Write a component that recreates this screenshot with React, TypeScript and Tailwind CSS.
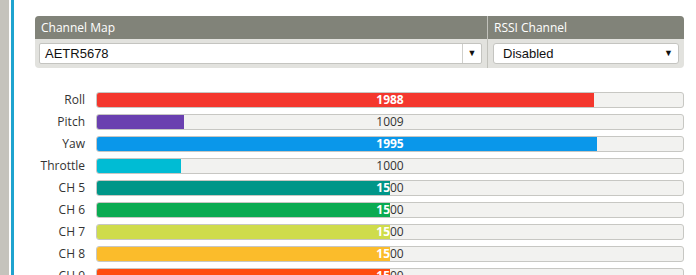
import React from "react"

const channels = [
  { name: "Roll", value: 1988, color: "bg-[#f4372d]" },
  { name: "Pitch", value: 1009, color: "bg-[#6a40b0]" },
  { name: "Yaw", value: 1995, color: "bg-[#0a97ea]" },
  { name: "Throttle", value: 1000, color: "bg-[#00bcd4]" },
  { name: "CH 5", value: 1500, color: "bg-[#009688]" },
  { name: "CH 6", value: 1500, color: "bg-[#0aab52]" },
  { name: "CH 7", value: 1500, color: "bg-[#cfdc4b]" },
  { name: "CH 8", value: 1500, color: "bg-[#fbbc2b]" },
  { name: "CH 9", value: 1500, color: "bg-[#ff4b0e]" },
]

function Meter({ value, color }: { value: number; color: string }) {
  const pct = ((value - 800) / 1400) * 100
  return (
    <div className="relative h-[16px] flex-1 overflow-hidden rounded-[3px] border border-[#c7c7c3] bg-[#f2f2f0]">
      <div className="absolute inset-0 flex items-center justify-center text-[12px] leading-none text-[#333]">
        {value}
      </div>
      <div className={`absolute inset-y-0 left-0 overflow-hidden ${color}`} style={{ width: `${pct}%` }}>
        <div className="flex h-full w-[586px] items-center justify-center text-[12px] font-bold leading-none text-white">
          {value}
        </div>
      </div>
    </div>
  )
}

export default function App() {
  return (
    <div className="flex h-[275px] w-[696px] overflow-hidden bg-white font-['Open_Sans',sans-serif]">
      <div className="w-[9px] bg-[#c5c3bc]" />
      <div className="ml-[2px] w-[3px] bg-[#1fa3cf]" />

      <div className="flex-1 pt-[16px] pl-[21px] pr-[12px]">
        {/* ── channel map / rssi ── */}
        <div className="flex rounded-[4px] bg-[#e2e2de]">
          <div className="w-[453px] border-r border-[#c2c2bc]">
            <div className="flex h-[23px] items-center rounded-tl-[4px] bg-[#818379] pl-[6px] text-[12px] text-white">
              Channel Map
            </div>
            <div className="py-[4px] pl-[4px] pr-[5px]">
              <div className="flex h-[21px] items-center rounded-[2px] border border-[#c4c4c0] bg-white font-['Liberation_Sans',sans-serif] text-[13px] text-[#111]">
                <span className="flex-1 pl-[5px]">AETR5678</span>
                <span className="flex h-full w-[19px] items-center justify-center border-l border-[#cfcfcb] text-[9px]">▼</span>
              </div>
            </div>
          </div>
          <div className="flex-1">
            <div className="flex h-[23px] items-center rounded-tr-[4px] bg-[#818379] pl-[6px] text-[12px] text-white">
              RSSI Channel
            </div>
            <div className="py-[4px] pl-[5px] pr-[5px]">
              <div className="flex h-[21px] items-center rounded-[3px] border border-[#c4c4c0] bg-white font-['Liberation_Sans',sans-serif] text-[13px] text-[#111]">
                <span className="flex-1 pl-[9px]">Disabled</span>
                <span className="w-[19px] text-center text-[9px]">▼</span>
              </div>
            </div>
          </div>
        </div>

        {/* ── channel bars ── */}
        <div className="mt-[24px] flex flex-col gap-[6px]">
          {channels.map((c) => (
            <div key={c.name} className="flex items-center">
              <div className="mr-[11px] w-[50px] text-right text-[12px] leading-none text-[#333]">{c.name}</div>
              <Meter value={c.value} color={c.color} />
            </div>
          ))}
        </div>
      </div>
    </div>
  )
}
